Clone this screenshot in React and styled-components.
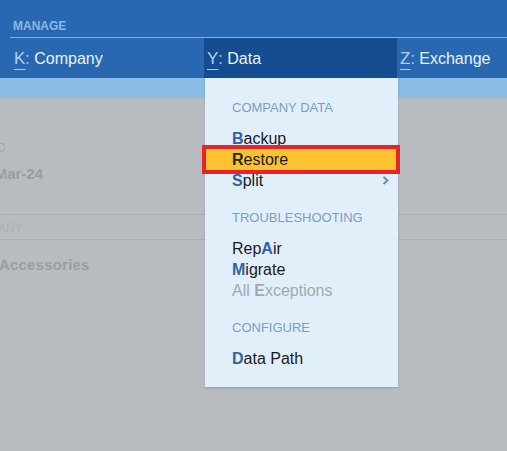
import styled, { createGlobalStyle } from "styled-components"

const GlobalStyle = createGlobalStyle`
  html, body {
    margin: 0;
    padding: 0;
    background: #b8bcc0;
    font-family: "Liberation Sans", Arial, sans-serif;
  }
  #root {
    width: 507px;
    height: 451px;
    overflow: hidden;
  }
`

const menu = [
  {
    title: "Company Data",
    items: [
      { key: "B", rest: "ackup" },
      { key: "R", rest: "estore", active: true },
      { key: "S", rest: "plit", more: true },
    ],
  },
  {
    title: "Troubleshooting",
    items: [
      { pre: "Rep", key: "A", rest: "ir" },
      { key: "M", rest: "igrate" },
      { pre: "All ", key: "E", rest: "xceptions", disabled: true },
    ],
  },
  {
    title: "Configure",
    items: [{ key: "D", rest: "ata Path" }],
  },
]

function Chevron() {
  return (
    <svg width="7" height="9" viewBox="0 0 7 9">
      <polyline points="1.5,1 5.5,4.5 1.5,8" fill="none" stroke="#6f8db3" strokeWidth="2" />
    </svg>
  )
}

export default function App() {
  return (
    <Page>
      <GlobalStyle />
      <Header>
        <Title>MANAGE</Title>
        <TabRow>
          <Tab>
            <Hot>K</Hot>
            <Colon>:</Colon> Company
          </Tab>
          <Tab selected>
            <Hot>Y</Hot>
            <Colon>:</Colon> Data
            <Dropdown>
              {menu.map((section) => (
                <Section key={section.title}>
                  <SectionTitle>{section.title}</SectionTitle>
                  {section.items.map((item) => (
                    <Item
                      key={item.key + item.rest}
                      $active={item.active}
                      $disabled={item.disabled}
                    >
                      <span>
                        {item.pre}
                        <Key $active={item.active} $disabled={item.disabled}>
                          {item.key}
                        </Key>
                        {item.rest}
                      </span>
                      {item.more && <Chevron />}
                    </Item>
                  ))}
                </Section>
              ))}
            </Dropdown>
          </Tab>
          <Tab>
            <Hot>Z</Hot>
            <Colon>:</Colon> Exchange
          </Tab>
        </TabRow>
      </Header>
      <Strip />
      <Content>
        <FieldLabel $shift={-40} $top={42}>PERIOD</FieldLabel>
        <FieldValue $shift={-27} $top={8}>31-Mar-24</FieldValue>
        <Divider $top={30} />
        <FieldLabel $shift={-37} $top={5} $light>COMPANY</FieldLabel>
        <Divider $top={3} />
        <FieldValue $shift={-1} $top={15} $wide>Accessories</FieldValue>
      </Content>
    </Page>
  )
}

const Page = styled.div`
  width: 507px;
  height: 451px;
  display: flex;
  flex-direction: column;
`
const Header = styled.header`
  background: #2a67b1;
  display: flex;
  flex-direction: column;
`
const Title = styled.div`
  height: 38px;
  box-sizing: border-box;
  padding: 19px 0 0 3px;
  margin-left: 10px;
  font-size: 12px;
  font-weight: 700;
  color: #8cb8e6;
  border-bottom: 1px solid #7fb2ea;
`
const TabRow = styled.nav`
  display: flex;
  height: 40px;
  padding-left: 11px;
`
const Tab = styled.div`
  position: relative;
  width: 193px;
  flex-shrink: 0;
  box-sizing: border-box;
  padding: 2px 0 0 3px;
  display: flex;
  align-items: center;
  font-size: 16px;
  color: #e6f3ff;
  background: ${(p) => (p.selected ? "#164c90" : "transparent")};
  white-space: pre;
`
const Hot = styled.span`
  color: #a9d2f5;
  font-size: 17px;
  text-decoration: underline;
  text-underline-offset: 5px;
  text-decoration-thickness: 1px;
`
const Colon = styled.span`
  color: #a9d2f5;
`
const Strip = styled.div`
  height: 20px;
  background: #89bde6;
`
const Content = styled.main`
  flex: 1;
  display: flex;
  flex-direction: column;
  overflow: hidden;
  color: #9a9ea3;
`
const FieldLabel = styled.div`
  margin-top: ${(p) => p.$top || 0}px;
  margin-left: ${(p) => p.$shift}px;
  font-size: 12px;
  line-height: 16px;
  color: ${(p) => (p.$light ? "#adb1b5" : "#a4a8ac")};
  white-space: nowrap;
`
const FieldValue = styled.div`
  margin-top: ${(p) => p.$top || 0}px;
  margin-left: ${(p) => p.$shift}px;
  font-size: 15px;
  font-weight: 700;
  line-height: 20px;
  letter-spacing: ${(p) => (p.$wide ? "0.2px" : "0")};
  white-space: nowrap;
`
const Divider = styled.div`
  margin-top: ${(p) => p.$top}px;
  height: 1px;
  background: #a9aeb2;
`
const Dropdown = styled.div`
  position: absolute;
  top: 100%;
  left: 1px;
  width: 193px;
  z-index: 5;
  background: #e1effb;
  box-shadow: 0 1px 2px rgba(60, 90, 130, 0.35);
  padding: 20px 0 18px;
  display: flex;
  flex-direction: column;
  gap: 17px;
  white-space: normal;
`
const Section = styled.section`
  display: flex;
  flex-direction: column;
`
const SectionTitle = styled.div`
  padding-left: 27px;
  margin-bottom: 10px;
  font-size: 13px;
  line-height: 20px;
  text-transform: uppercase;
  color: #7d9dc3;
`
const Item = styled.div`
  display: flex;
  align-items: center;
  justify-content: space-between;
  height: 21px;
  font-size: 16px;
  line-height: 21px;
  color: ${(p) => (p.$disabled ? "#a3a9ae" : "#1a1a1a")};
  padding: 0 9px 0 ${(p) => (p.$active ? 26 : 27)}px;
  margin: ${(p) => (p.$active ? "0 2px 0 1px" : "0")};
  background: ${(p) => (p.$active ? "#fdc22f" : "transparent")};
  box-shadow: ${(p) => (p.$active ? "0 0 0 4px #e5232a" : "none")};
`
const Key = styled.b`
  color: ${(p) => (p.$active ? "#1e2a10" : p.$disabled ? "#a3a9ae" : "#2f62a8")};
`
